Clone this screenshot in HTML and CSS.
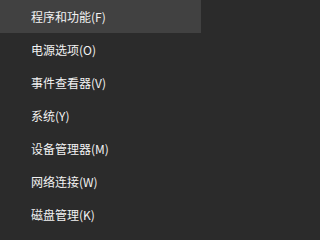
FILE: index.html
```html
<!DOCTYPE html>
<html lang="zh-CN">
<head>
<meta charset="utf-8">
<link rel="stylesheet" href="styles.css">
</head>
<body>
<ul class="menu">
  <li class="item active">程序和功能(F)</li>
  <li class="item">电源选项(O)</li>
  <li class="item">事件查看器(V)</li>
  <li class="item">系统(Y)</li>
  <li class="item">设备管理器(M)</li>
  <li class="item">网络连接(W)</li>
  <li class="item">磁盘管理(K)</li>
</ul>
</body>
</html>
```
FILE: styles.css
```css
html, body {
  margin: 0;
  padding: 0;
  background: #2b2b2b;
}
body {
  width: 201px;
  height: 234px;
  overflow: hidden;
}
.menu {
  list-style: none;
  margin: 0;
  padding: 0;
  display: flex;
  flex-direction: column;
}
.item {
  height: 33px;
  display: flex;
  align-items: center;
  padding-left: 31px;
  font-family: "Noto Sans CJK SC", "Noto Sans", sans-serif;
  font-size: 12px;
  color: #f2f2f2;
  white-space: nowrap;
}
.item.active {
  background: #414141;
}
```
